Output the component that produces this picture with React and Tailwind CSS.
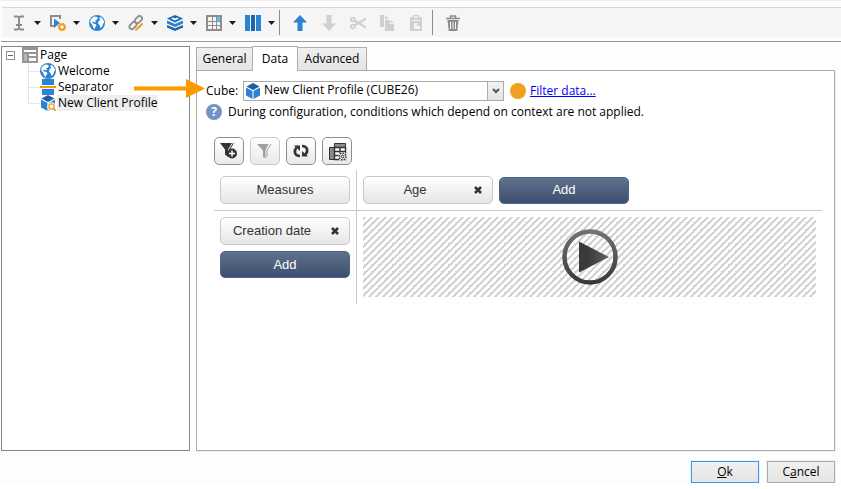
import React from "react";

const UI = "font-['Open_Sans','Noto_Sans',sans-serif]";

function Svg({ w = 16, h = 16, children, className = "" }) {
  return (
    <svg width={w} height={h} viewBox={`0 0 ${w} ${h}`} aria-hidden="true" className={`shrink-0 ${className}`}>
      {children}
    </svg>
  );
}

const BeamIcon = () => (
  <Svg>
    <path d="M3 1.500h3.500L8 2.500l1.500-1H13M3 14.500h3.500L8 13.500l1.500 1H13M8 2.500v11M5 10h6" fill="none" stroke="#8c8c8c" strokeWidth="2" />
  </Svg>
);
const PlayGearIcon = () => (
  <Svg>
    <path d="M4 11H1V1h9v3" fill="none" stroke="#8c8c8c" strokeWidth="2" />
    <path d="M4 3.500l6 4.500-6 5z" fill="#2b83d3" />
    <circle cx="12" cy="12" r="2.600" fill="#fff" stroke="#f39a12" strokeWidth="1.800" />
    <circle cx="12" cy="12" r="3.700" fill="none" stroke="#f39a12" strokeWidth="1.200" strokeDasharray="1.500 1.400" />
  </Svg>
);
const GlobeIcon = () => (
  <Svg>
    <circle cx="8" cy="8" r="8" fill="#2b83d3" />
    <path d="M2 4l3-2.500 2.500.3L9 3 7.500 5 6 5.500 7 7 5 7.500 4 6.500 3 7l1 1.500 2.500.5 1 1.500L6 12.500 5.500 14.500 4 12 3 9.500 1 7z" fill="#fff" />
    <path d="M10 3l2-1 2.500 3 .7 3-1.200.5-.5 2.500-2 2L10.500 10 9 8.500 9.500 6l2-1z" fill="#fff" />
  </Svg>
);
const LinkIcon = () => (
  <Svg>
    <g fill="none" stroke="#8c8c8c" strokeWidth="1.800">
      <rect x="-4" y="-2.400" width="8" height="4.800" rx="2.400" transform="translate(10.500 4.500) rotate(-45)" />
      <rect x="-4" y="-2.400" width="8" height="4.800" rx="2.400" transform="translate(5 10.500) rotate(-45)" />
    </g>
    <path d="M8.500 14.500L14.500 8.500" stroke="#f39a12" strokeWidth="2.200" />
    <path d="M7 16l.6-2.400 1.700 1.700z" fill="#f39a12" />
  </Svg>
);
const LayersIcon = () => (
  <Svg>
    <path d="M8 0l8 3.500-8 4-8-4z" fill="#1d66b0" />
    <path d="M0 5.500l8 3.500 8-3.500v3l-8 3.500-8-3.500z" fill="#2b83d3" />
    <path d="M0 10l8 3.300L16 10v2.500L8 16l-8-3.500z" fill="#1d66b0" />
    <path d="M4 3.500l2-1L8 3.500l2-1 2 1-4 2z" fill="#fff" />
  </Svg>
);
const GridIcon = () => (
  <Svg>
    <path d="M0 0h16v16H0z" fill="#8c8c8c" />
    {[2, 7, 11].map((y) => [2, 7, 11].map((x) => (
      <rect
        key={`${x}-${y}`}
        x={x}
        y={y}
        width={x === 2 ? 4 : 3}
        height={y === 2 ? 4 : 3}
        fill={x === 11 && y === 2 ? "#4fc8f4" : "#f5f5f5"}
      />
    )))}
  </Svg>
);
const ColumnsIcon = () => (
  <Svg>
    <path d="M0 0h5v16H0zM11 0h5v16h-5z" fill="#2b83d3" />
    <path d="M6 0h4v16H6z" fill="#1d66b0" />
  </Svg>
);
const UpIcon = () => (
  <Svg><path d="M8 0l7 7.500H10.500V16h-5V7.500H1z" fill="#2b83d3" /></Svg>
);
const DownIcon = () => (
  <Svg><path d="M8 16l7-7.500H10.500V0h-5v8.500H1z" fill="#d0d0d0" /></Svg>
);
const CutIcon = () => (
  <Svg>
    <g fill="none" stroke="#d0d0d0" strokeWidth="1.800">
      <circle cx="2.800" cy="4.500" r="1.900" /><circle cx="2.800" cy="11.500" r="1.900" />
      <path d="M4.500 5.500L16 12.500M4.500 10.500L16 3.500" strokeWidth="2.200" />
    </g>
  </Svg>
);
const CopyIcon = () => (
  <Svg>
    <path d="M1 0h4v12H1zM6 5h5v4h4v7H6z" fill="#d0d0d0" />
    <path d="M6 0l4 4H6zM12 5l3 3h-3z" fill="#d0d0d0" />
  </Svg>
);
const PasteIcon = () => (
  <Svg>
    <path d="M2 2h3V0h6v2h3v14H2z" fill="#d0d0d0" />
    <path d="M6 1.500h4V3H6zM4 5h8v1H4z" fill="#f5f5f5" />
    <path d="M6 8h3.500L12 10.500V14H6z" fill="#f5f5f5" />
    <path d="M9 8v3h3z" fill="#d0d0d0" />
  </Svg>
);
const TrashIcon = () => (
  <Svg>
    <path d="M1 3.500h14M5.500 3V1h5v2" fill="none" stroke="#8c8c8c" strokeWidth="1.500" />
    <path d="M2.500 5h11l-1.200 11H3.700z" fill="#8c8c8c" />
    <path d="M5.500 7v7M8 7v7M10.500 7v7" stroke="#f5f5f5" />
  </Svg>
);
const PageIcon = () => (
  <Svg>
    <path d="M0 0h16v16H0z" fill="#969696" />
    <path d="M2 3h12v2H2zM2 7h3v7H2zM7 7h7v2H7zM7 11h7v3H7z" fill="#fff" />
    <path d="M2 7h3v7H2z" fill="#b4b4b4" />
  </Svg>
);
const SeparatorIcon = () => (
  <Svg>
    <path d="M2 0h12v6H2zM2 10h12v6H2z" fill="#2b83d3" />
    <path d="M0 7h16v2H0z" fill="#f39a12" />
  </Svg>
);
function CubeShape() {
  return (
    <>
      <path d="M8 0l6.500 3.500L8 7 1.500 3.500z" fill="#1d5fa5" />
      <path d="M1 4.500l6.500 3.500v8L1 12.500zM15 4.500L8.500 8v8l6.500-3.500z" fill="#2b83d3" />
    </>
  );
}
const CubeIcon = ({ className }) => <Svg className={className}><CubeShape /></Svg>;
const CubeSearchIcon = () => (
  <Svg>
    <CubeShape />
    <circle cx="11.500" cy="11.500" r="4.200" fill="#fff" />
    <circle cx="11.500" cy="11.500" r="2.600" fill="#fff" stroke="#f39a12" strokeWidth="1.300" />
    <path d="M13.300 13.300l2.500 2.500" stroke="#f39a12" strokeWidth="1.800" />
  </Svg>
);

const menus = [
  ["Insert", BeamIcon], ["Action", PlayGearIcon], ["Web", GlobeIcon], ["Link", LinkIcon],
  ["Layers", LayersIcon], ["Table", GridIcon], ["Columns", ColumnsIcon],
];
const edits = [
  ["Move up", UpIcon], ["Move down", DownIcon], ["Cut", CutIcon], ["Copy", CopyIcon], ["Paste", PasteIcon],
];

function IconButton({ label, Icon }) {
  return (
    <button aria-label={label} className="flex h-6 w-[29px] items-center justify-center">
      <Icon />
    </button>
  );
}

function Toolbar() {
  return (
    <div className="border-t border-[#eeeeee]">
      <div className="ml-0.5 mt-1.5 flex h-[30px] items-center border-t border-[#d6d6d6] bg-[#f5f5f5] pl-1">
        {menus.map(([label, Icon]) => (
          <button key={label} aria-label={label} className="flex h-6 w-[39px] items-center gap-[7px] pl-[5px]">
            <Icon />
            <Svg w={7} h={4}><path d="M0 0h7L3.500 4z" fill="#1c1c1c" /></Svg>
          </button>
        ))}
        <span className="h-[25px] w-px bg-[#8c8c8c]" />
        <div className="flex pl-[5px] pr-0.5">
          {edits.map(([label, Icon]) => <IconButton key={label} label={label} Icon={Icon} />)}
        </div>
        <span className="h-[25px] w-px bg-[#8c8c8c]" />
        <div className="flex pl-[5px]">
          <IconButton label="Delete" Icon={TrashIcon} />
        </div>
      </div>
      <div className="ml-px mt-1 h-px bg-[#999999]" />
    </div>
  );
}

const nodes = [["Welcome", GlobeIcon], ["Separator", SeparatorIcon], ["New Client Profile", CubeSearchIcon]];

function Tree() {
  return (
    <nav className="w-[189px] shrink-0 border border-[#828790] bg-white">
      <div className="flex h-4 items-center pl-1">
        <button aria-label="Collapse Page" className="mr-[7px] h-[9px] w-[9px] shrink-0 border border-[#919191] bg-white">
          <span className="mx-auto block h-px w-[5px] bg-[#4b63a7]" />
        </button>
        <PageIcon />
        <span className="pl-0.5">Page</span>
      </div>
      <ul>
        {nodes.map(([name, Icon], i) => (
          <li key={name} className="flex h-4 items-center pl-[26px]">
            <Svg w={12} h={16}>
              <path d={i === 2 ? "M.5 0v8.500H12" : "M.5 0v16M0 8.500h12"} fill="none" stroke="#e6e6e6" />
            </Svg>
            <Icon />
            <span className={i === 2 ? "ml-px bg-[#eeeeee] px-px leading-4" : "pl-0.5 leading-4"}>{name}</span>
          </li>
        ))}
      </ul>
    </nav>
  );
}

function Tabs() {
  const idle = "h-[23px] border border-b-0 border-[#acacac] bg-linear-to-b from-[#f0f0f0] to-[#e5e5e5]";
  return (
    <div role="tablist" className="flex h-6 items-end">
      <button role="tab" className={`${idle} w-14 border-r-0`}>General</button>
      <button role="tab" aria-selected="true" className="z-10 -mb-px h-[25px] w-[46px] border border-b-0 border-[#acacac] bg-white">Data</button>
      <button role="tab" className={`${idle} w-[69px] border-l-0`}>Advanced</button>
    </div>
  );
}

function ToolButton({ label, disabled, children }) {
  return (
    <button
      aria-label={label}
      disabled={disabled}
      className={`flex h-7 w-[30px] items-center justify-center rounded-[5px] border bg-linear-to-b from-white to-[#e9e9e9] ${disabled ? "border-[#c8c8c8]" : "border-[#8e8e8e]"}`}
    >
      {children}
    </button>
  );
}

function Chip({ children, closable }) {
  return (
    <button className="flex h-7 w-[130px] items-center rounded-[5px] border border-[#c8c8c8] bg-linear-to-b from-white to-[#e6e6e6] text-[#333333]">
      <span className={closable ? "flex-1 pr-2" : "flex-1"}>{children}</span>
      {closable && (
        <Svg w={8} h={8} className="mr-2.5">
          <path d="M1 1l6 6M7 1L1 7" stroke="#333333" strokeWidth="2.500" />
        </Svg>
      )}
    </button>
  );
}

function AddButton() {
  return (
    <button className="h-[27px] w-[130px] rounded-[5px] border border-[#4c6490] bg-linear-to-b from-[#61728d] to-[#3d4e6e] text-white">
      Add
    </button>
  );
}

function Pivot() {
  return (
    <section className="ml-[17px] mr-3 mt-[17px] font-['Liberation_Sans',Arial,sans-serif] text-[13px]">
      <div className="flex gap-1.5">
        <ToolButton label="Add filter">
          <Svg w={18} h={18}>
            <path d="M0 1h12L8 7.500V15l-3-2.500v-5z" fill="#333333" />
            <path d="M13.500 1L9.500 7.500" stroke="#333333" />
            <circle cx="12" cy="11.500" r="5" fill="#333333" />
            <path d="M12 8.500v6M9 11.500h6" stroke="#fff" strokeWidth="1.500" />
          </Svg>
        </ToolButton>
        <ToolButton label="Clear filter" disabled>
          <Svg w={16} h={16}>
            <path d="M0 1h11.500L8.500 7v8.500L6 14V7.500z" fill="#a0a0a0" />
            <path d="M14 1l-4 6.500V14" stroke="#a0a0a0" fill="none" />
          </Svg>
        </ToolButton>
        <ToolButton label="Refresh">
          <Svg w={18} h={14}>
            <g fill="none" stroke="#333333" strokeWidth="2.600">
              <path d="M8 12C2.500 12 1.500 7 4.500 3.500" />
              <path d="M10 2C15.500 2 16.500 7 13.500 10.500" />
            </g>
            <path d="M2 1.500H8V7zM16 12.500H10V7z" fill="#333333" />
          </Svg>
        </ToolButton>
        <ToolButton label="Table settings">
          <Svg w={19} h={19}>
            <path d="M6.500 1.500h11v4h-11zM1.500 5.500h5v12h-5z" fill="#8a8a8a" stroke="#333333" />
            <path d="M6.500 5.500h11v12h-11zM12 5.500v12M6.500 9.500h11M6.500 13.500h11" fill="#fff" stroke="#333333" strokeWidth="1.400" />
            <circle cx="14.500" cy="14.500" r="4.500" fill="#f0f0f0" />
            <circle cx="14.500" cy="14.500" r="3.400" fill="none" stroke="#333333" strokeWidth="1.600" strokeDasharray="1.500 1.100" />
            <circle cx="14.500" cy="14.500" r="1.300" fill="none" stroke="#333333" />
          </Svg>
        </ToolButton>
      </div>
      <div className="mt-[5px] grid grid-cols-[143px_1fr]">
        <div className="flex items-start border-b border-r border-[#c8c8c8] px-1.5 pb-1.5 pt-1.5">
          <Chip>Measures</Chip>
        </div>
        <div className="flex items-center gap-1.5 border-b border-[#c8c8c8] px-1.5 py-1.5">
          <Chip closable>Age</Chip>
          <AddButton />
        </div>
        <div className="flex h-[93px] flex-col gap-1.5 border-r border-[#c8c8c8] px-1.5 pt-1.5">
          <Chip closable>Creation date</Chip>
          <AddButton />
        </div>
        <div className="px-1.5 pt-1.5">
          <div className="flex h-20 items-center justify-center bg-[linear-gradient(135deg,#d3d3d3_25%,#ffffff_25%,#ffffff_50%,#d3d3d3_50%,#d3d3d3_75%,#ffffff_75%)] bg-[length:7px_7px]">
            <button aria-label="Run" className="rounded-full">
              <Svg w={56} h={56}>
                <defs>
                  <linearGradient id="ring" x1="0" y1="0" x2="0" y2="1">
                    <stop offset="0" stopColor="#727272" /><stop offset="1" stopColor="#383838" />
                  </linearGradient>
                  <linearGradient id="tri" x1="0" y1="0" x2="1" y2="0">
                    <stop offset="0.300" stopColor="#3a3a3a" /><stop offset="1" stopColor="#626262" />
                  </linearGradient>
                </defs>
                <circle cx="28" cy="28" r="25.500" fill="none" stroke="url(#ring)" strokeWidth="4.500" />
                <path d="M17 12.500l30 15.500-30 15.500z" fill="url(#tri)" />
              </Svg>
            </button>
          </div>
        </div>
      </div>
    </section>
  );
}

function DataPanel() {
  return (
    <div className="h-[381px] border border-[#acacac] bg-white shadow-[1px_1px_0_#eeeeee]">
      <div className="flex items-center pl-[9px] pt-2.5">
        <label htmlFor="cube" className="w-[37px]">Cube:</label>
        <div className="relative flex h-5 w-[261px]">
          <select id="cube" className="w-full appearance-none border border-[#acacac] bg-white pb-0.5 pl-5 leading-4">
            <option>New Client Profile (CUBE26)</option>
          </select>
          <CubeIcon className="pointer-events-none absolute left-0.5 top-0.5" />
          <span className="pointer-events-none absolute inset-y-0 right-0 flex w-[17px] items-center justify-center border border-[#acacac] bg-linear-to-b from-[#f2f2f2] to-[#e4e4e4]">
            <Svg w={8} h={6}><path d="M1 1l3 3 3-3" fill="none" stroke="#555555" strokeWidth="2" /></Svg>
          </span>
        </div>
        <span className="ml-1.5 mr-1 h-4 w-4 rounded-full bg-[#f0a020]" />
        <a href="#filter" className="text-[#0000ff] underline">Filter data...</a>
      </div>
      <p className="flex items-center gap-1.5 pl-[9px] pt-[3px]">
        <span className="flex h-4 w-4 items-center justify-center rounded-full bg-[#7393c6] text-[12px] font-bold leading-4 text-white">?</span>
        During configuration, conditions which depend on context are not applied.
      </p>
      <Pivot />
    </div>
  );
}

export default function App() {
  const action = "h-[22px] w-[68px] border bg-linear-to-b from-[#f0f0f0] to-[#e5e5e5] shadow-[0_0_0_1px_#f0f0f0]";
  return (
    <div className={`${UI} bg-[#fdfdfd] text-[12px] leading-4 text-black`}>
      <Toolbar />
      <main className="relative flex gap-1.5 pl-px pr-1.5 pt-1">
        <Tree />
        <div className="min-w-0 flex-1">
          <Tabs />
          <DataPanel />
        </div>
        <svg width="71" height="20" viewBox="0 0 71 20" aria-hidden="true" className="pointer-events-none absolute left-[134px] top-[37px]">
          <path d="M0 7.500h52V0l19 9.500L52 19v-7.500H0z" fill="#ff9900" />
        </svg>
      </main>
      <footer className="flex justify-end gap-2 pr-1.5 pt-2.5">
        <button className={`${action} border-[#3399ff]`}><u>O</u>k</button>
        <button className={`${action} border-[#acacac]`}>C<u>a</u>ncel</button>
      </footer>
    </div>
  );
}
